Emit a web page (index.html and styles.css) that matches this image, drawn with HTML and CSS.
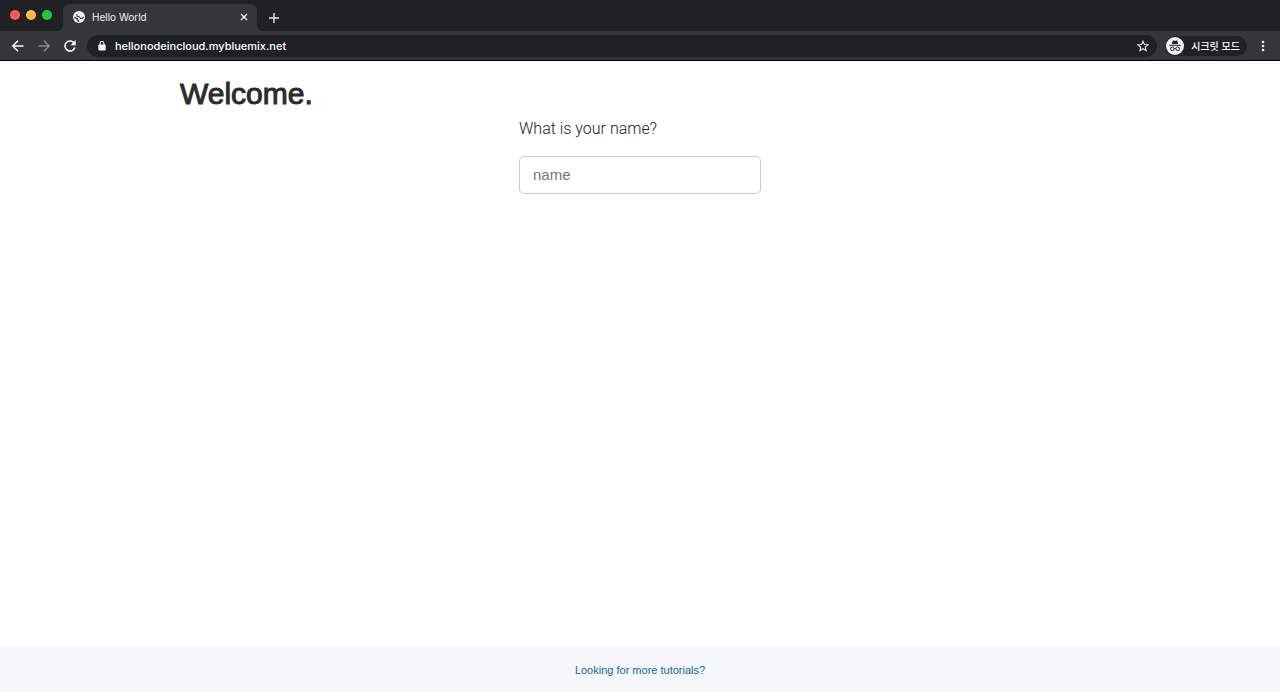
FILE: index.html
```html
<!DOCTYPE html>
<html lang="en">
<head>
<meta charset="utf-8">
<title>Hello World</title>
<link rel="stylesheet" href="styles.css">
</head>
<body>
<header class="browser">
  <div class="tabstrip">
    <div class="lights"><span class="light red"></span><span class="light yellow"></span><span class="light green"></span></div>
    <div class="tab">
      <svg class="globe" width="12" height="12" viewBox="0 0 12 12" aria-hidden="true"><circle cx="6" cy="6" r="6" fill="#f1f3f4"/><path d="M6.6 1.2 5.4 1.6 5.3 3 4.2 3.4 4.4 4.8 6.2 5 7 6.6 8.8 6.8 10.7 5.6 10.8 6.8 9.4 7.9 7.2 8 6 6.2 3.6 5.8 3.3 3.6Z" fill="#35363a"/><path d="M1.1 5.6 3.4 6.8 5 7.3 5.1 8.8 6.4 9.3 6.2 10.8 4.6 10.6 3.8 8.6 1.4 7.3Z" fill="#35363a"/></svg>
      <span class="tab-title">Hello World</span>
      <button class="icon-btn" aria-label="Close tab"><svg width="8" height="8" viewBox="0 0 8 8"><path d="M1 1 7 7M7 1 1 7" stroke="#fff" stroke-width="1.4"/></svg></button>
    </div>
    <button class="icon-btn new-tab" aria-label="New tab"><svg width="10" height="10" viewBox="0 0 10 10"><path d="M5 0V10M0 5H10" stroke="#e8eaed" stroke-width="1.4"/></svg></button>
  </div>
  <div class="toolbar">
    <nav class="nav">
      <button class="icon-btn" aria-label="Back"><svg width="12" height="12" viewBox="0 0 12 12"><path d="M11.5 6H1M6 .8 .9 6 6 11.2" fill="none" stroke="#fff" stroke-width="1.5"/></svg></button>
      <button class="icon-btn" aria-label="Forward"><svg width="12" height="12" viewBox="0 0 12 12"><path d="M.5 6H11M6 .8 11.1 6 6 11.2" fill="none" stroke="#8b8c8f" stroke-width="1.5"/></svg></button>
      <button class="icon-btn" aria-label="Reload"><svg width="12" height="12" viewBox="0 0 12 12"><path d="M10.3 3.4A5 5 0 1 0 10.8 7.5" fill="none" stroke="#fff" stroke-width="1.6"/><path d="M11.7 0V5.2H6.5Z" fill="#fff"/></svg></button>
    </nav>
    <div class="address">
      <svg width="8" height="10" viewBox="0 0 8 10" aria-hidden="true"><rect x=".3" y="3.5" width="7.4" height="6" rx="1" fill="#f1f3f4"/><path d="M2.1 4V2.4a1.9 1.9 0 0 1 3.8 0V4" fill="none" stroke="#f1f3f4" stroke-width="1.1"/></svg>
      <input class="url" aria-label="Address" value="hellonodeincloud.mybluemix.net">
      <button class="icon-btn" aria-label="Bookmark"><svg width="12" height="12" viewBox="0 0 12 12"><path d="M6 1.2 7.4 4.5 11 4.8 8.3 7.1 9.1 10.6 6 8.7 2.9 10.6 3.7 7.1 1 4.8 4.6 4.5Z" fill="none" stroke="#e8eaed" stroke-width="1.1"/></svg></button>
    </div>
    <button class="incognito" lang="ko">
      <svg width="18" height="18" viewBox="0 0 18 18" aria-hidden="true"><circle cx="9" cy="9" r="9" fill="#f1f3f4"/><path d="M5.8 7 6.7 3.8Q6.9 3.3 7.5 3.5L9 3.9 10.5 3.5Q11.1 3.3 11.3 3.8L12.2 7Z" fill="#202124"/><path d="M3.3 8.3H14.7" stroke="#202124"/><g fill="none" stroke="#202124"><circle cx="6.3" cy="11.8" r="1.8"/><circle cx="11.7" cy="11.8" r="1.8"/><path d="M8.1 11.5Q9 11 9.9 11.5"/></g></svg>
      <span>시크릿 모드</span>
    </button>
    <button class="icon-btn" aria-label="Menu"><svg width="4" height="12" viewBox="0 0 4 12" fill="#f1f3f4"><circle cx="2" cy="2" r="1.3"/><circle cx="2" cy="6" r="1.3"/><circle cx="2" cy="10" r="1.3"/></svg></button>
  </div>
</header>
<main class="page">
  <h1 class="welcome">Welcome.</h1>
  <form class="form">
    <label class="question" for="name">What is your name?</label>
    <input class="name" id="name" type="text" placeholder="name">
  </form>
</main>
<footer class="footer"><a class="more" href="#">Looking for more tutorials?</a></footer>
</body>
</html>
```
FILE: styles.css
```css
* { box-sizing: border-box; }
body {
  margin: 0;
  min-height: 100vh;
  display: flex;
  flex-direction: column;
  background: #fff;
  font-family: "Liberation Sans", Arial, sans-serif;
}
button { border: 0; padding: 0; background: none; }
svg { display: block; flex: none; }
.browser {
  background: #35363a;
  border-bottom: 1px solid #000;
  font-family: Inter, "Noto Sans CJK KR", sans-serif;
}
.tabstrip {
  display: flex;
  height: 31px;
  padding-left: 10px;
  background: #202124;
}
.lights { display: flex; gap: 6px; padding-top: 10px; width: 53px; }
.light { width: 10px; height: 10px; border-radius: 50%; }
.red { background: #ff5a52; }
.yellow { background: #fdbc40; }
.green { background: #1acb3f; }
.tab {
  position: relative;
  display: flex;
  align-items: center;
  gap: 7px;
  width: 194px;
  height: 27px;
  margin-top: 4px;
  padding: 0 9px 1px 10px;
  border-radius: 6px 6px 0 0;
  background: #35363a;
}
.tab::before, .tab::after {
  content: "";
  position: absolute;
  bottom: 0;
  width: 6px;
  height: 6px;
}
.tab::before { right: 100%; background: radial-gradient(circle at 0 0, #202124 6px, #35363a 6px); }
.tab::after { left: 100%; background: radial-gradient(circle at 100% 0, #202124 6px, #35363a 6px); }
.tab-title { flex: 1; font-size: 10px; line-height: 12px; color: #f1f3f4; }
.icon-btn { display: flex; align-items: center; justify-content: center; flex: none; }
.new-tab { margin: 4px 0 0 12px; }
.toolbar {
  display: flex;
  align-items: center;
  height: 29px;
  padding: 0 15px 0 12px;
}
.nav { display: flex; gap: 14px; margin-right: 11px; }
.address {
  flex: 1;
  display: flex;
  align-items: center;
  gap: 9px;
  height: 22px;
  padding: 0 8px 0 11px;
  border-radius: 11px;
  background: #202124;
}
.url {
  flex: 1;
  min-width: 0;
  padding: 0;
  border: 0;
  outline: 0;
  background: none;
  color: #fff;
  font: 500 11px Inter, sans-serif;
}
.incognito {
  display: flex;
  align-items: center;
  gap: 7px;
  height: 20px;
  margin: 0 14px 0 8px;
  padding: 0 7px 0 1px;
  border-radius: 10px;
  background: #202124;
  color: #fff;
  font: 500 10px "Noto Sans CJK KR", sans-serif;
}
.page { flex: 1; width: 100%; max-width: 920px; margin: 0 auto; padding-top: 16px; }
.welcome {
  margin: 0;
  color: #2b2b2b;
  font-size: 30px;
  line-height: 34px;
  font-weight: 400;
  -webkit-text-stroke: 1px #2b2b2b;
}
.form { display: flex; flex-direction: column; gap: 17px; width: 242px; margin: 8px auto 0; }
.question { color: #222; font: 300 16px/20px Roboto, sans-serif; }
.name {
  height: 38px;
  padding: 0 13px 2px;
  border: 1px solid #ccc;
  border-radius: 5px;
  font: 15px "Liberation Sans", Arial, sans-serif;
}
.name::placeholder { color: #777; }
.footer {
  display: flex;
  align-items: center;
  justify-content: center;
  height: 46px;
  padding-top: 2px;
  background: #f5f7fb;
}
.more { color: #0f679f; font-size: 11px; text-decoration: none; }
```
